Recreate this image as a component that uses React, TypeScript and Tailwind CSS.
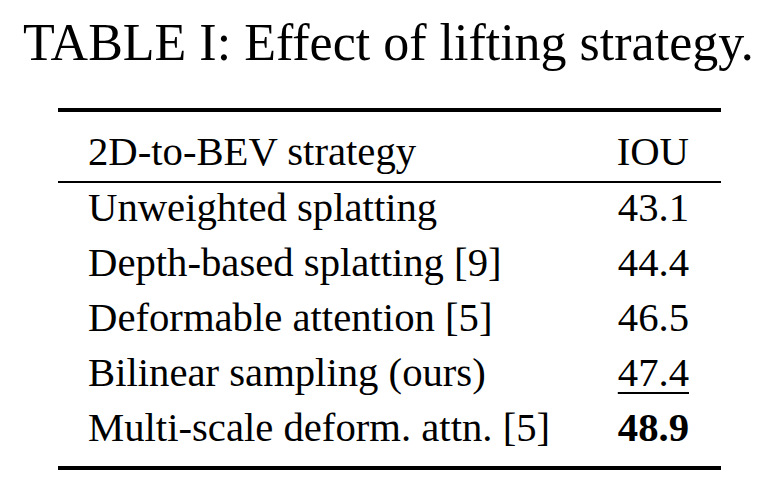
import React from 'react';

type Row = {
	strategy: string;
	iou: string;
	underline?: boolean;
	bold?: boolean;
};

const rows: Row[] = [
	{ strategy: 'Unweighted splatting', iou: '43.1' },
	{ strategy: 'Depth-based splatting [9]', iou: '44.4' },
	{ strategy: 'Deformable attention [5]', iou: '46.5' },
	{ strategy: 'Bilinear sampling (ours)', iou: '47.4', underline: true },
	{ strategy: 'Multi-scale deform. attn. [5]', iou: '48.9', bold: true },
];

export default function App() {
	return (
		<div className="w-[758px] h-[490px] bg-white text-black font-['Liberation_Serif','Times_New_Roman',serif] overflow-hidden">
			<h1 className="pt-[17px] pl-[23px] text-[52px] leading-[51px] font-normal whitespace-nowrap">
				TABLE I: Effect of lifting strategy.
			</h1>

			<div className="ml-[58px] mt-[40px] w-[663px] text-[40.7px]">
				<div className="h-[4px] bg-black" />
				<div className="flex justify-between pl-[30px] pr-[32px] pt-[15px] pb-[5px] leading-[49px]">
					<span>2D-to-BEV strategy</span>
					<span>IOU</span>
				</div>
				<div className="h-[2px] bg-black" />
				{rows.map((row) => (
					<div
						key={row.strategy}
						className="flex justify-between h-[55px] pl-[30px] pr-[32px] leading-[49px]"
					>
						<span className="whitespace-nowrap">{row.strategy}</span>
						<span
							className={`${row.bold ? 'font-bold' : ''} ${
								row.underline ? 'underline decoration-[1.5px] underline-offset-[6px]' : ''
							}`}
						>
							{row.iou}
						</span>
					</div>
				))}
				<div className="mt-[8px] h-[4px] bg-black" />
			</div>
		</div>
	);
}
